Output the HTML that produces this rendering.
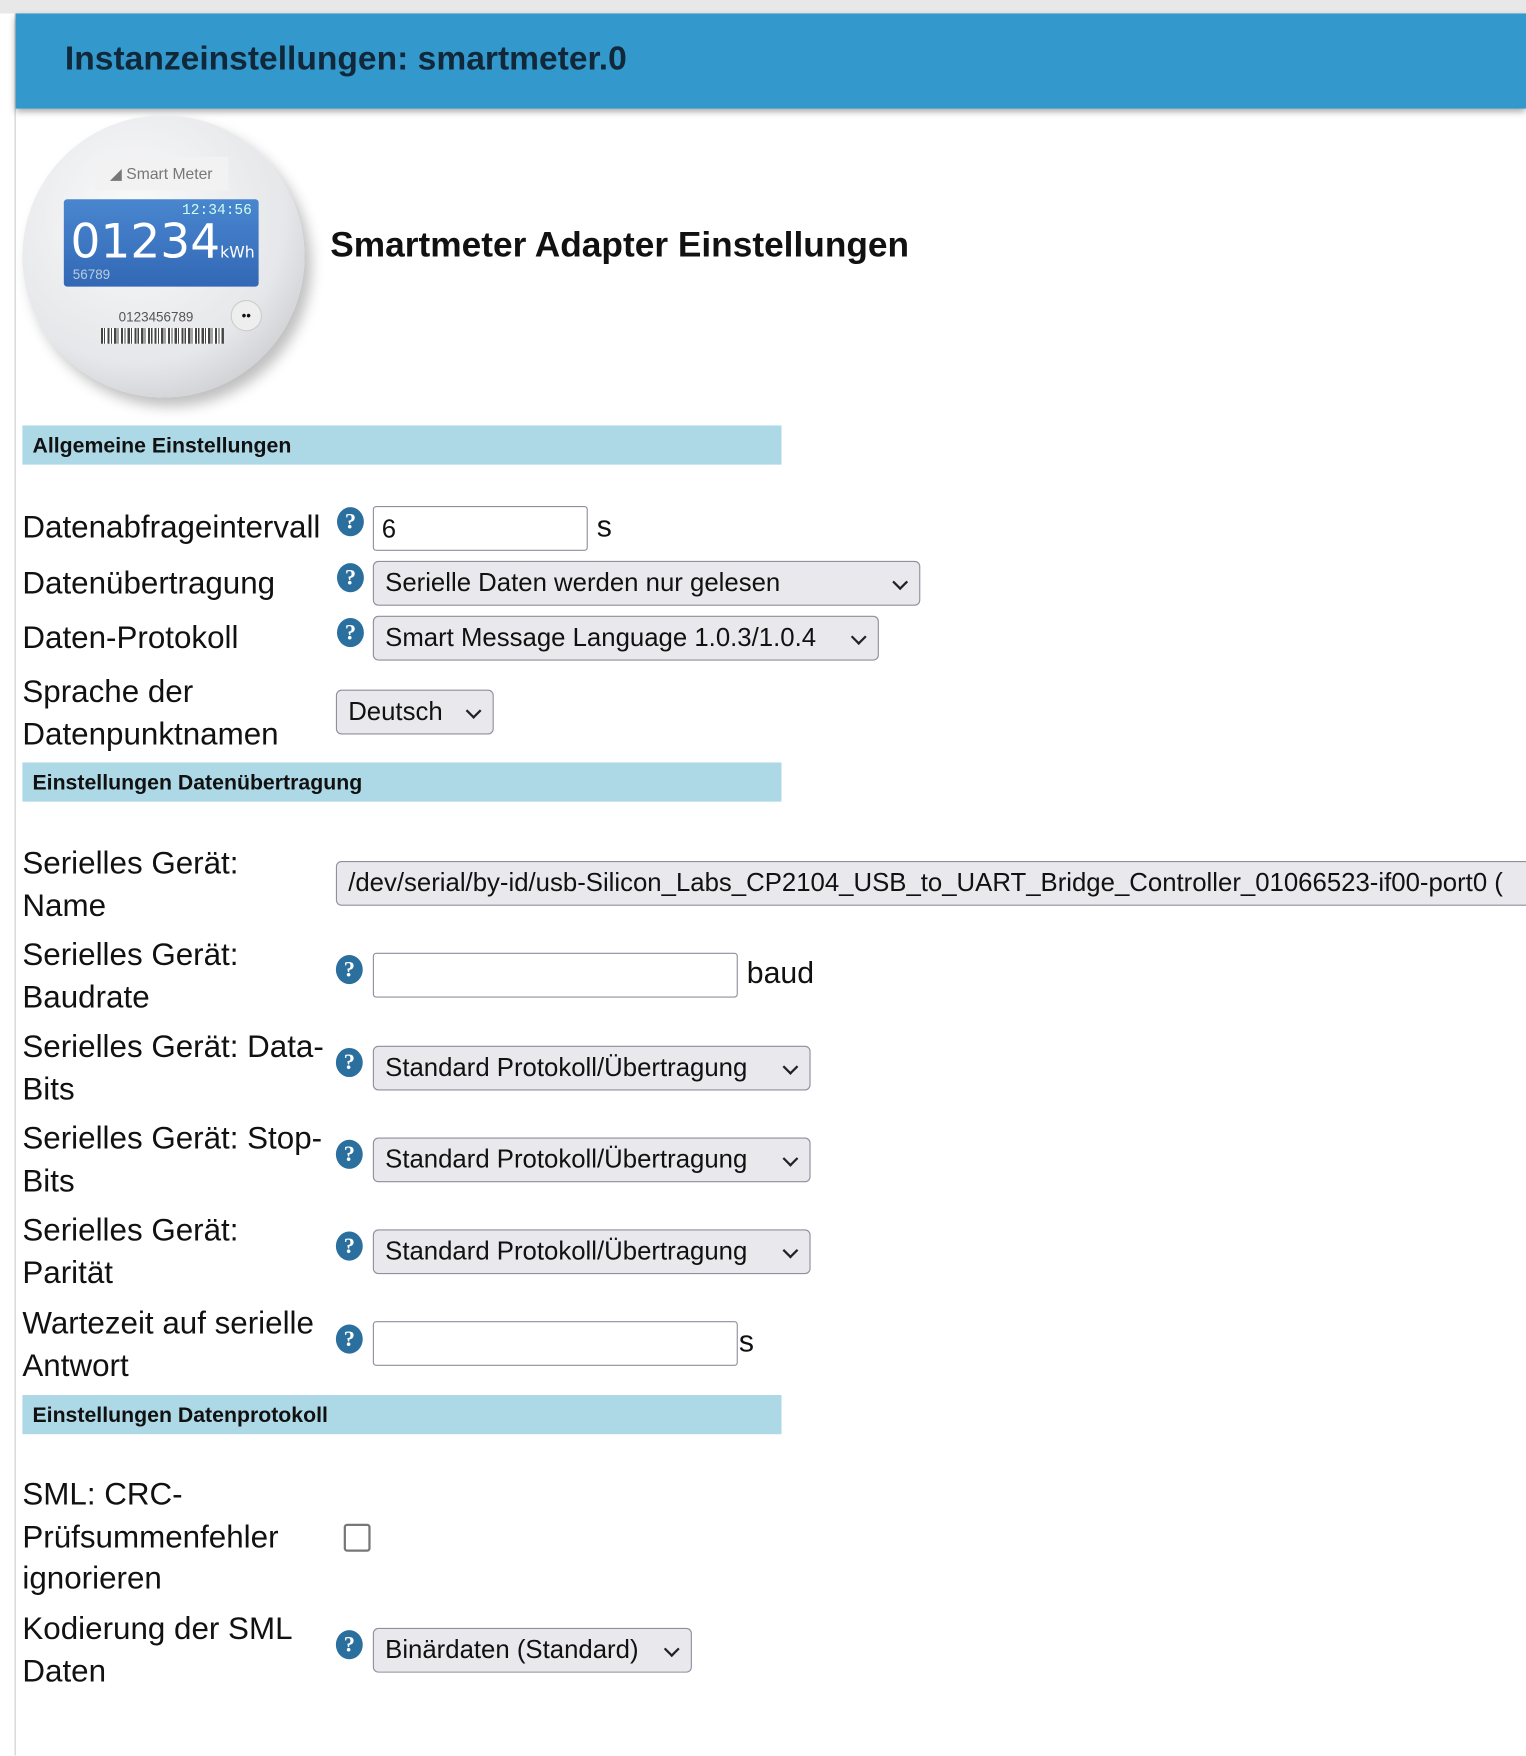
<!DOCTYPE html>
<html><head><meta charset="utf-8"><style>
html,body{margin:0;padding:0;background:#fff;width:1526px;height:1755px;overflow:hidden}
#w{position:absolute;left:0;top:0;width:1363px;height:1568px;transform:scale(1.1196);transform-origin:0 0;font-family:"Liberation Sans",Arial,sans-serif;color:#111}
.a{position:absolute}
.hdr{left:14px;top:12px;width:1349px;height:85px;background:#3399cc;box-shadow:0 3px 6px rgba(0,0,0,.35)}
.hdr span{position:absolute;left:44px;top:24px;font-size:30px;font-weight:bold;color:#10283a}
.sec{left:20px;width:678px;height:35px;background:#add8e6;font-weight:bold;font-size:19px;line-height:37px;text-indent:9px}
.lbl{left:20px;font-size:28px;line-height:37.5px;color:#111;white-space:nowrap}
.q{width:24px;height:26px;border-radius:50%;background:#2b6f9e;color:#fff;font-family:"Liberation Serif",serif;font-weight:bold;font-size:20px;text-align:center;line-height:26px}
.in{border:1px solid #8f8f9d;border-radius:3px;background:#fff;box-sizing:border-box;font-size:23px;line-height:38px;padding-left:7px}
.sel{border:1.5px solid #8f8f9d;border-radius:5px;background:#e9e9ed;box-sizing:border-box;font-size:23px;line-height:37px;padding-left:10px;white-space:nowrap;overflow:hidden}
.sel i{position:absolute;right:12px;top:13px;width:8px;height:8px;border-right:2px solid #222;border-bottom:2px solid #222;transform:rotate(45deg)}
.u{font-size:27px}
</style></head><body><div id="w">
<div class="a" style="left:0;top:0;width:1363px;height:12px;background:#e8e8e8"></div>
<div class="a" style="left:13px;top:12px;width:1px;height:1556px;background:#ccc"></div>
<div class="a hdr"><span>Instanzeinstellungen: smartmeter.0</span></div>

<div class="a" style="left:20px;top:103px;width:252px;height:252px;border-radius:50%;background:radial-gradient(circle at 40% 35%,#fafafa 0%,#e6e7ea 60%,#c9cacd 85%,#b5b6b9 100%);box-shadow:6px 8px 12px rgba(0,0,0,.25)"></div>
<div class="a" style="left:84px;top:140px;width:120px;height:30px;background:#f2f2f2;font-size:14px;color:#777;line-height:30px;text-align:center">◢ Smart Meter</div>
<div class="a" style="left:57px;top:178px;width:174px;height:78px;background:linear-gradient(#4a86d0,#3268b5);border-radius:3px;color:#fff">
<div class="a" style="right:6px;top:2px;font-size:13px;font-family:'Liberation Mono',monospace;color:#cfe">12:34:56</div>
<div class="a" style="left:6px;top:16px;font-size:42px;line-height:44px;font-family:'DejaVu Sans',sans-serif">01234<span style="font-size:14px">kWh</span></div>
<div class="a" style="left:8px;top:60px;font-size:12px;color:#bcd">56789</div></div>
<div class="a" style="left:106px;top:276px;font-size:12px;color:#555">0123456789</div>
<div class="a" style="left:90px;top:293px;width:110px;height:14px;background:repeating-linear-gradient(90deg,#444 0 2px,#fff 2px 3px,#444 3px 4px,#fff 4px 6px)"></div>
<div class="a" style="left:206px;top:268px;width:26px;height:26px;border-radius:50%;background:#eee;border:1px solid #ccc;font-size:12px;text-align:center;line-height:26px">••</div>

<div class="a" style="left:295px;top:200px;font-size:31.5px;font-weight:bold">Smartmeter Adapter Einstellungen</div>

<div class="a sec" style="top:380px">Allgemeine Einstellungen</div>

<div class="a lbl" style="top:452px">Datenabfrageintervall</div>
<div class="a q" style="left:301px;top:453px">?</div>
<div class="a in" style="left:333px;top:452px;width:192px;height:40px">6</div>
<div class="a u" style="left:533px;top:455px">s</div>

<div class="a lbl" style="top:502px">Datenübertragung</div>
<div class="a q" style="left:301px;top:503px">?</div>
<div class="a sel" style="left:333px;top:501px;width:489px;height:40px">Serielle Daten werden nur gelesen<i></i></div>

<div class="a lbl" style="top:551px">Daten-Protokoll</div>
<div class="a q" style="left:301px;top:552px">?</div>
<div class="a sel" style="left:333px;top:550px;width:452px;height:40px">Smart Message Language 1.0.3/1.0.4<i></i></div>

<div class="a lbl" style="top:599px">Sprache der<br>Datenpunktnamen</div>
<div class="a sel" style="left:300px;top:616px;width:141px;height:40px">Deutsch<i></i></div>

<div class="a sec" style="top:681px">Einstellungen Datenübertragung</div>

<div class="a lbl" style="top:752px">Serielles Gerät:<br>Name</div>
<div class="a sel" style="left:300px;top:769px;width:1080px;height:40px">/dev/serial/by-id/usb-Silicon_Labs_CP2104_USB_to_UART_Bridge_Controller_01066523-if00-port0 (</div>

<div class="a lbl" style="top:834px">Serielles Gerät:<br>Baudrate</div>
<div class="a q" style="left:300px;top:853px">?</div>
<div class="a in" style="left:333px;top:851px;width:326px;height:40px"></div>
<div class="a u" style="left:667px;top:854px">baud</div>

<div class="a lbl" style="top:916px">Serielles Gerät: Data-<br>Bits</div>
<div class="a q" style="left:300px;top:936px">?</div>
<div class="a sel" style="left:333px;top:934px;width:391px;height:40px">Standard Protokoll/Übertragung<i></i></div>

<div class="a lbl" style="top:998px">Serielles Gerät: Stop-<br>Bits</div>
<div class="a q" style="left:300px;top:1018px">?</div>
<div class="a sel" style="left:333px;top:1016px;width:391px;height:40px">Standard Protokoll/Übertragung<i></i></div>

<div class="a lbl" style="top:1080px">Serielles Gerät:<br>Parität</div>
<div class="a q" style="left:300px;top:1100px">?</div>
<div class="a sel" style="left:333px;top:1098px;width:391px;height:40px">Standard Protokoll/Übertragung<i></i></div>

<div class="a lbl" style="top:1163px">Wartezeit auf serielle<br>Antwort</div>
<div class="a q" style="left:300px;top:1183px">?</div>
<div class="a in" style="left:333px;top:1180px;width:326px;height:40px"></div>
<div class="a u" style="left:660px;top:1183px">s</div>

<div class="a sec" style="top:1246px">Einstellungen Datenprotokoll</div>

<div class="a lbl" style="top:1316px">SML: CRC-<br>Prüfsummenfehler<br>ignorieren</div>
<div class="a" style="left:307px;top:1361px;width:20px;height:21px;border:2px solid #777;border-radius:3px"></div>

<div class="a lbl" style="top:1436px">Kodierung der SML<br>Daten</div>
<div class="a q" style="left:300px;top:1456px">?</div>
<div class="a sel" style="left:333px;top:1454px;width:285px;height:40px">Binärdaten (Standard)<i></i></div>
</div></body></html>
